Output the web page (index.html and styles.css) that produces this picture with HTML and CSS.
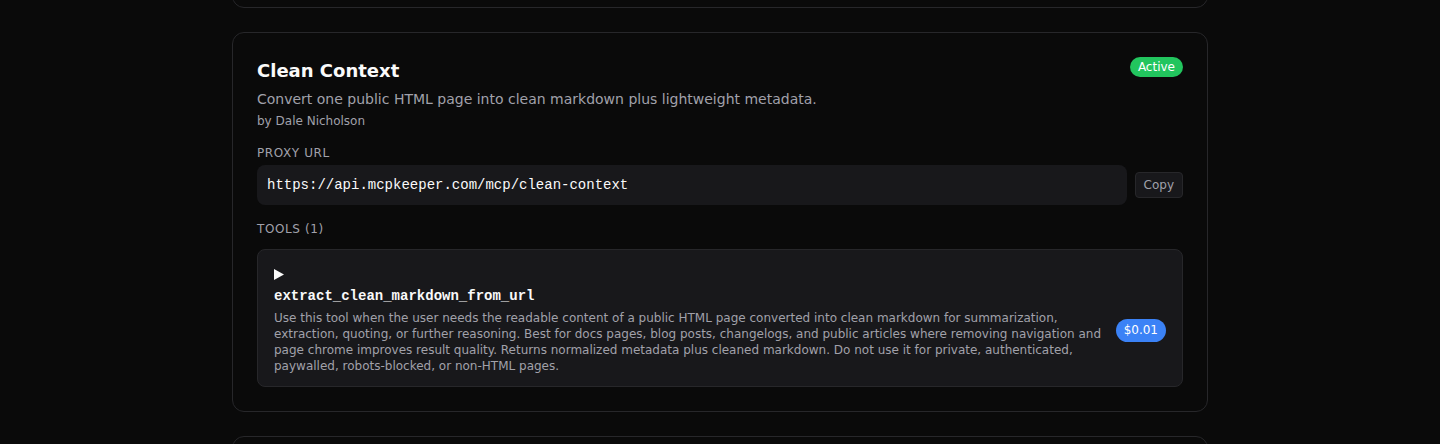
FILE: index.html
```html
<!DOCTYPE html>
<html lang="en">
<head>
<meta charset="utf-8">
<title>Clean Context</title>
<link rel="stylesheet" href="styles.css">
</head>
<body>
<main class="list">
  <section class="card card-partial"></section>
  <section class="card">
    <header class="card-head">
      <div class="card-titles">
        <h2 class="card-title">Clean Context</h2>
        <p class="card-desc">Convert one public HTML page into clean markdown plus lightweight metadata.</p>
        <p class="card-author">by Dale Nicholson</p>
      </div>
      <span class="badge badge-active">Active</span>
    </header>
    <div class="section-label label-proxy">Proxy URL</div>
    <div class="url-row">
      <code class="url-box">https://api.mcpkeeper.com/mcp/clean-context</code>
      <button class="copy-btn">Copy</button>
    </div>
    <div class="section-label label-tools">Tools (1)</div>
    <div class="tool">
      <div class="tool-toggle">
        <svg width="10" height="11" viewBox="0 0 10 11"><polygon points="0,0 10,5.5 0,11" fill="#fafafa"/></svg>
      </div>
      <div class="tool-row">
        <div class="tool-main">
          <div class="tool-name">extract_clean_markdown_from_url</div>
          <p class="tool-desc">Use this tool when the user needs the readable content of a public HTML page converted into clean markdown for summarization, extraction, quoting, or further reasoning. Best for docs pages, blog posts, changelogs, and public articles where removing navigation and page chrome improves result quality. Returns normalized metadata plus cleaned markdown. Do not use it for private, authenticated, paywalled, robots-blocked, or non-HTML pages.</p>
        </div>
        <span class="badge badge-price">$0.01</span>
      </div>
    </div>
  </section>
  <section class="card card-partial-bottom"></section>
</main>
</body>
</html>
```
FILE: styles.css
```css
* { box-sizing: border-box; }
html, body { margin: 0; padding: 0; }
body {
  background: #0a0a0a;
  color: #fafafa;
  font-family: "DejaVu Sans", sans-serif;
  height: 444px;
  overflow: hidden;
}
.list {
  width: 976px;
  margin: 0 auto;
  display: flex;
  flex-direction: column;
  gap: 24px;
}
.card {
  border: 1px solid #27272a;
  border-radius: 12px;
  background: #0a0a0a;
  padding: 24px;
}
.card-partial {
  height: 100px;
  margin-top: -92px;
}
.card-partial-bottom {
  height: 100px;
}
.card-head {
  display: flex;
  justify-content: space-between;
  align-items: flex-start;
}
.card-title {
  margin: 0;
  font-size: 18px;
  line-height: 28px;
  font-weight: 700;
  color: #fafafa;
}
.card-desc {
  margin: 4px 0 0;
  font-size: 14px;
  line-height: 20px;
  color: #a1a1aa;
}
.card-author {
  margin: 4px 0 0;
  font-size: 12px;
  line-height: 16px;
  color: #a1a1aa;
}
.badge {
  display: inline-flex;
  align-items: center;
  border-radius: 999px;
  font-size: 12px;
  color: #ffffff;
  white-space: nowrap;
  flex-shrink: 0;
}
.badge-active {
  background: #22c55e;
  height: 20px;
  padding: 0 8px;
}
.badge-price {
  background: #3b82f6;
  height: 23px;
  padding: 0 8px;
}
.section-label {
  font-size: 12px;
  line-height: 16px;
  text-transform: uppercase;
  letter-spacing: 0.05em;
  color: #a1a1aa;
}
.label-proxy { margin-top: 16px; }
.label-tools { margin-top: 16px; }
.url-row {
  margin-top: 4px;
  display: flex;
  align-items: center;
  gap: 8px;
}
.url-box {
  flex: 1;
  display: block;
  background: #18181b;
  border-radius: 8px;
  padding: 10px;
  font-family: "Liberation Mono", monospace;
  font-size: 14px;
  line-height: 20px;
  color: #fafafa;
}
.copy-btn {
  background: #18181b;
  border: 1px solid #27272a;
  border-radius: 4px;
  color: #a1a1aa;
  font-family: "DejaVu Sans", sans-serif;
  font-size: 12px;
  line-height: 16px;
  height: 26px;
  padding: 0 8px;
}
.tool {
  margin-top: 12px;
  background: #18181b;
  border: 1px solid #27272a;
  border-radius: 8px;
  padding: 16px 16px 12px;
}
.tool-toggle {
  height: 16px;
  display: flex;
  align-items: center;
  margin-bottom: 4px;
}
.tool-row {
  display: flex;
  align-items: center;
  gap: 12px;
}
.tool-main { flex: 1; }
.tool-name {
  font-family: "Liberation Mono", monospace;
  font-weight: 700;
  font-size: 14px;
  line-height: 20px;
  color: #fafafa;
}
.tool-desc {
  margin: 4px 0 0;
  font-size: 12px;
  line-height: 16px;
  color: #a1a1aa;
}
```
